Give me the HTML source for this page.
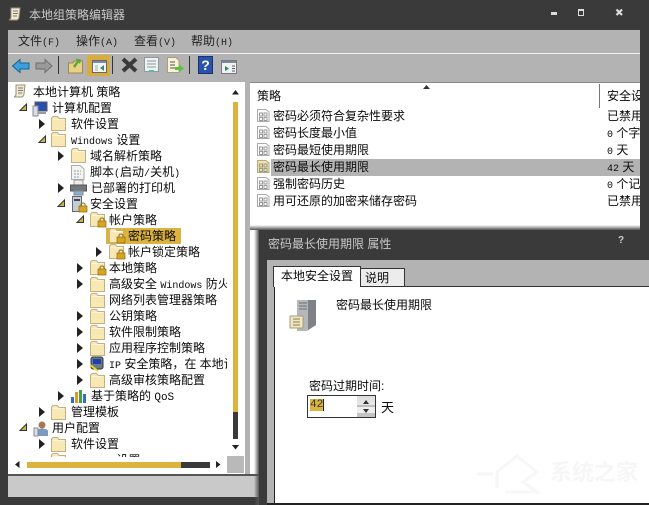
<!DOCTYPE html>
<html><head><meta charset="utf-8">
<style>
html,body{margin:0;padding:0}
body{width:649px;height:505px;overflow:hidden;position:relative;background:#3a3a3a;font-family:"Liberation Sans","WenQuanYi Zen Hei","Noto Sans CJK SC",sans-serif;font-size:12px;color:#0a0a0a}
.a{position:absolute}
.t{position:absolute;white-space:nowrap;line-height:16px;height:16px}
svg{position:absolute;overflow:visible}
.m{font-family:"Liberation Mono","WenQuanYi Zen Hei",monospace;font-size:10px}
</style></head><body>
<svg width="0" height="0" style="position:absolute">
<defs>
<g id="f"><path d="M.5 3.5V14.5H14.5V2.5H8L6.5.5H2L.5 2Z" fill="#f8e8b4" stroke="#c2b084"/><path d="M2 3.5H13" stroke="#fff6d8"/></g>
<path id="o" d="M0 0L6 5L0 10Z" fill="#222"/>
<path id="e" d="M6.5 0V6.5H0Z" fill="#c9b54d" stroke="#333" stroke-width="1"/>
<g id="l"><rect x="0" y="3" width="8" height="6" fill="#d9a520" stroke="#8a6a10" stroke-width=".7"/><path d="M2 3V1.5A2 1.500 0 0 1 6 1.500V3" fill="none" stroke="#8a6a10"/></g>
<g id="p"><path d="M.5 1.500H9L12 4V13.500H.5Z" fill="#fff" stroke="#aaa"/><rect x="2.500" y="5" width="3" height="3" fill="none" stroke="#999"/><rect x="7" y="5" width="3" height="3" fill="none" stroke="#999"/><rect x="2.500" y="9.500" width="3" height="3" fill="none" stroke="#999"/><rect x="7" y="9.500" width="3" height="3" fill="none" stroke="#999"/></g>
<g id="s"><path d="M3 1H12L11 10Q11 12 9 13H1Q3 12 3 10Z" fill="#f2ead0" stroke="#9a9278"/><path d="M5 4H10M5 6.500H10M5 9H9" stroke="#777"/></g>
</defs>
</svg>

<!-- title bar -->
<svg style="left:8px;top:7px" width="16" height="16"><use href="#s"/></svg>
<div class="t" style="left:29px;top:7px;color:#c9c9c9">本地组策略编辑器</div>
<div class="a" style="left:551px;top:12px;width:6px;height:3px;background:#ddd"></div>
<div class="a" style="left:578px;top:9px;width:4px;height:4px;border:1px solid #ddd;border-top-width:2px"></div>
<svg style="left:615px;top:8px" width="9" height="9"><path d="M1.500 1.500L7 7M7 1.500L1.500 7" stroke="#ddd" stroke-width="2.200"/></svg>

<!-- menu + toolbar -->
<div class="a" style="left:8px;top:30px;width:632px;height:52px;background:#b3b3b3"></div>
<div class="a" style="left:8px;top:53px;width:632px;height:1px;background:#f0f0f0"></div>
<div class="t" style="left:18px;top:33px;color:#222">文件<span class="m">(F)</span></div>
<div class="t" style="left:76px;top:33px;color:#222">操作<span class="m">(A)</span></div>
<div class="t" style="left:134px;top:33px;color:#222">查看<span class="m">(V)</span></div>
<div class="t" style="left:191px;top:33px;color:#222">帮助<span class="m">(H)</span></div>

<svg style="left:12px;top:58px" width="18" height="16"><path d="M.5 8L8 1.500V5H17V11H8V14.500Z" fill="#3ca0dc" stroke="#16668f"/></svg>
<svg style="left:35px;top:58px" width="18" height="16"><path d="M17 8L10 1.500V5H1V11H10V14.500Z" fill="#9a9a9a" stroke="#6e6e6e"/></svg>
<div class="a" style="left:58px;top:56px;width:1px;height:18px;background:#333"></div>
<svg style="left:68px;top:58px" width="16" height="16"><path d="M.5 5H5L6 3H14.500V15H.5Z" fill="#e9d184" stroke="#9c8a4f"/><path d="M5 8L9 3L8 .5L13 1.500L12 6L10.500 4.500L7 10Z" fill="#5aa83a"/></svg>
<div class="a" style="left:87px;top:55px;width:23px;height:21px;background:#d8ad3c"></div>
<svg style="left:92px;top:60px" width="15" height="13"><rect x=".5" y=".5" width="14" height="12" fill="#f5f5f5" stroke="#667"/><rect x="1" y="1" width="13" height="2" fill="#7a8ca0"/><rect x="3" y="5" width="3" height="6" fill="#bcd8d0"/><path d="M12 5V11L8 8Z" fill="#3c8a6a"/></svg>
<div class="a" style="left:112px;top:56px;width:1px;height:18px;background:#333"></div>
<svg style="left:121px;top:57px" width="17" height="16"><path d="M2 2L15 14M15 2L2 14" stroke="#3a3a3a" stroke-width="4"/></svg>
<svg style="left:144px;top:57px" width="16" height="16"><rect x=".5" y=".5" width="14" height="14" fill="#eef2f2" stroke="#8a9aa0"/><path d="M3 4H12M3 7H12M3 10H12" stroke="#8a9a9a"/><rect x="5" y="13" width="5" height="2" fill="#58b8b0"/></svg>
<svg style="left:167px;top:57px" width="18" height="17"><path d="M.5 .5H9L12 3.500V15.500H.5Z" fill="#f8f3d8" stroke="#a8a078"/><path d="M3 5H8M3 8H8M3 11H8" stroke="#555"/><path d="M8 10H12V7.500L17 11.500L12 15V13H8Z" fill="#5cbf3a"/></svg>
<div class="a" style="left:189px;top:56px;width:1px;height:18px;background:#333"></div>
<div class="a" style="left:198px;top:56px;width:15px;height:18px;background:#2a52a8;border:1px solid #16307a;box-sizing:border-box;color:#fff;font:bold 14px/16px 'Liberation Sans';text-align:center">?</div>
<svg style="left:221px;top:60px" width="16" height="14"><rect x=".5" y=".5" width="15" height="13" fill="#f2f2f2" stroke="#778"/><rect x="1" y="1" width="14" height="2" fill="#7a8a98"/><path d="M4 6V11L8 8.500Z" fill="#2f8a5a"/><path d="M11 6H14M11 8.500H14M11 11H14" stroke="#557"/></svg>

<!-- left panel -->
<div class="a" style="left:8px;top:82px;width:237px;height:392px;background:#fff;overflow:hidden"></div>
<div class="a" style="left:245px;top:82px;width:5px;height:392px;background:#b3b3b3"></div>
<div class="a" style="left:8px;top:474px;width:242px;height:2px;background:#555"></div>
<div class="a" style="left:8px;top:476px;width:251px;height:21px;background:#c9c9c9"></div>

<!-- tree -->
<svg style="left:13px;top:84px" width="16" height="16"><use href="#s"/></svg>
<div class="t" style="left:33px;top:84px">本地计算机 策略</div>
<svg style="left:20px;top:104px" width="8" height="8"><use href="#e"/></svg>
<svg style="left:32px;top:101px" width="16" height="15"><rect x="3" y="1" width="12" height="9" fill="#2a4fae" stroke="#556"/><rect x="1" y="5" width="5" height="10" fill="#d8dde2" stroke="#889"/><rect x="6" y="11" width="8" height="2" fill="#99a"/></svg>
<div class="t" style="left:52px;top:100px">计算机配置</div>

<svg style="left:39px;top:119px" width="7" height="10"><use href="#o"/></svg>
<svg style="left:51px;top:116px" width="15" height="15"><use href="#f"/></svg>
<div class="t" style="left:71px;top:116px">软件设置</div>
<svg style="left:39px;top:136px" width="8" height="8"><use href="#e"/></svg>
<svg style="left:51px;top:132px" width="15" height="15"><use href="#f"/></svg>
<div class="t" style="left:71px;top:132px"><span class="m">Windows</span> 设置</div>

<svg style="left:58px;top:151px" width="7" height="10"><use href="#o"/></svg>
<svg style="left:71px;top:148px" width="15" height="15"><use href="#f"/></svg>
<div class="t" style="left:90px;top:148px">域名解析策略</div>
<svg style="left:71px;top:165px" width="14" height="15"><path d="M.5 .5H9L13 4V14.500H.5Z" fill="#f4f4f4" stroke="#aaa"/><path d="M3 6H10M3 9H10M3 12H8" stroke="#999" stroke-dasharray="2 1"/></svg>
<div class="t" style="left:90px;top:164px">脚本<span class="m">(</span>启动<span class="m">/</span>关机<span class="m">)</span></div>
<svg style="left:58px;top:183px" width="7" height="10"><use href="#o"/></svg>
<svg style="left:70px;top:180px" width="17" height="16"><rect x="4" y="0" width="9" height="5" fill="#eee" stroke="#999"/><rect x=".5" y="5" width="16" height="6" fill="#777" stroke="#555"/><rect x="4" y="11" width="9" height="4" fill="#8fb0c8" stroke="#789"/></svg>
<div class="t" style="left:91px;top:180px">已部署的打印机</div>
<svg style="left:58px;top:200px" width="8" height="8"><use href="#e"/></svg>
<svg style="left:72px;top:196px" width="16" height="16"><rect x=".5" y=".5" width="9" height="15" fill="#c6ccd4" stroke="#667"/><rect x="2" y="3" width="6" height="2" fill="#445"/><use href="#l" x="7" y="7"/></svg>
<div class="t" style="left:90px;top:196px">安全设置</div>
<svg style="left:77px;top:216px" width="8" height="8"><use href="#e"/></svg>
<svg style="left:90px;top:212px" width="17" height="16"><use href="#f"/><use href="#l" x="8" y="6"/></svg>
<div class="t" style="left:109px;top:212px">帐户策略</div>

<div class="a" style="left:106px;top:228px;width:75px;height:16px;background:#dcb33f"></div>
<svg style="left:109px;top:228px" width="17" height="16"><use href="#f"/><use href="#l" x="8" y="6"/></svg>
<div class="t" style="left:128px;top:228px">密码策略</div>
<svg style="left:96px;top:247px" width="7" height="10"><use href="#o"/></svg>
<svg style="left:109px;top:244px" width="17" height="16"><use href="#f"/><use href="#l" x="8" y="6"/></svg>
<div class="t" style="left:128px;top:244px">帐户锁定策略</div>

<svg style="left:77px;top:263px" width="7" height="10"><use href="#o"/></svg>
<svg style="left:90px;top:260px" width="17" height="16"><use href="#f"/><use href="#l" x="8" y="6"/></svg>
<div class="t" style="left:109px;top:260px">本地策略</div>
<svg style="left:77px;top:279px" width="7" height="10"><use href="#o"/></svg>
<svg style="left:90px;top:277px" width="15" height="15"><use href="#f"/></svg>
<div class="a" style="left:109px;top:276px;width:118px;height:16px;overflow:hidden;white-space:nowrap;line-height:16px">高级安全 <span class="m">Windows</span> 防火墙</div>
<svg style="left:90px;top:293px" width="15" height="15"><use href="#f"/></svg>
<div class="t" style="left:109px;top:292px">网络列表管理器策略</div>
<svg style="left:77px;top:311px" width="7" height="10"><use href="#o"/></svg>
<svg style="left:90px;top:309px" width="15" height="15"><use href="#f"/></svg>
<div class="t" style="left:109px;top:308px">公钥策略</div>
<svg style="left:77px;top:327px" width="7" height="10"><use href="#o"/></svg>
<svg style="left:90px;top:325px" width="15" height="15"><use href="#f"/></svg>
<div class="t" style="left:109px;top:324px">软件限制策略</div>
<svg style="left:77px;top:343px" width="7" height="10"><use href="#o"/></svg>
<svg style="left:90px;top:341px" width="15" height="15"><use href="#f"/></svg>
<div class="t" style="left:109px;top:340px">应用程序控制策略</div>
<svg style="left:77px;top:359px" width="7" height="10"><use href="#o"/></svg>
<svg style="left:89px;top:356px" width="16" height="16"><rect x="2" y="1" width="12" height="12" rx="2" fill="#6a7a88" stroke="#334"/><rect x="4" y="3" width="8" height="5" fill="#1d3fa8"/><path d="M1 9L9 15" stroke="#e8d820" stroke-width="2"/></svg>
<div class="a" style="left:109px;top:356px;width:118px;height:16px;overflow:hidden;white-space:nowrap;line-height:16px"><span class="m">IP</span> 安全策略，在 本地计算机</div>
<svg style="left:77px;top:375px" width="7" height="10"><use href="#o"/></svg>
<svg style="left:90px;top:373px" width="15" height="15"><use href="#f"/></svg>
<div class="t" style="left:109px;top:372px">高级审核策略配置</div>
<svg style="left:58px;top:391px" width="7" height="10"><use href="#o"/></svg>
<svg style="left:70px;top:389px" width="17" height="15"><rect x="1" y="8" width="3" height="6" fill="#2f6fc0"/><rect x="5" y="3" width="3" height="11" fill="#d89a2a"/><rect x="9" y="1" width="3" height="13" fill="#46a046"/><rect x="13" y="5" width="3" height="9" fill="#2f6fc0"/></svg>
<div class="t" style="left:91px;top:388px">基于策略的 <span class="m" style="font-size:11px">QoS</span></div>
<svg style="left:39px;top:407px" width="7" height="10"><use href="#o"/></svg>
<svg style="left:51px;top:405px" width="15" height="15"><use href="#f"/></svg>
<div class="t" style="left:71px;top:404px">管理模板</div>
<svg style="left:20px;top:424px" width="8" height="8"><use href="#e"/></svg>
<svg style="left:33px;top:421px" width="16" height="16"><circle cx="9" cy="4" r="3.500" fill="#a87850"/><path d="M3 15V10Q3 8 9 7.500Q15 8 15 10V15Z" fill="#7a9ac0"/><rect x="1" y="7" width="4" height="8" fill="#d8e0ea" stroke="#889"/></svg>
<div class="t" style="left:52px;top:420px">用户配置</div>
<svg style="left:39px;top:439px" width="7" height="10"><use href="#o"/></svg>
<svg style="left:51px;top:437px" width="15" height="15"><use href="#f"/></svg>
<div class="t" style="left:71px;top:436px">软件设置</div>
<div class="a" style="left:51px;top:453px;width:100px;height:4px;overflow:hidden"><svg style="left:0;top:0" width="15" height="15"><use href="#f"/></svg><div class="t" style="left:20px;top:-1px"><span class="m" style="visibility:hidden">Windows</span> 设置</div></div>
<div class="a" style="left:9px;top:457px;width:218px;height:17px;background:#fff"></div>

<!-- tree scrollbars -->
<svg style="left:232px;top:90px" width="7" height="5"><path d="M0 4.500L3.500 0L7 4.500Z" fill="#222"/></svg>
<div class="a" style="left:233px;top:102px;width:5px;height:310px;background:#dcb33f"></div>
<div class="a" style="left:233px;top:412px;width:5px;height:27px;background:#3a3a3a"></div>
<svg style="left:232px;top:445px" width="7" height="5"><path d="M0 0L3.500 4.500L7 0Z" fill="#222"/></svg>
<svg style="left:15px;top:461px" width="5" height="7"><path d="M4.500 0L0 3.500L4.500 7Z" fill="#222"/></svg>
<div class="a" style="left:27px;top:462px;width:154px;height:6px;background:#dcb33f"></div>
<div class="a" style="left:181px;top:462px;width:29px;height:6px;background:#3a3a3a"></div>
<svg style="left:216px;top:461px" width="5" height="7"><path d="M0 0L4.500 3.500L0 7Z" fill="#222"/></svg>
<div class="a" style="left:227px;top:456px;width:17px;height:17px;background:#b9b9b9"></div>

<!-- right panel -->
<div class="a" style="left:250px;top:82px;width:390px;height:145px;background:#fff;border-top:1px solid #888;box-sizing:border-box"></div>
<div class="a" style="left:250px;top:225px;width:399px;height:5px;background:linear-gradient(rgba(255,255,255,1),#555)"></div>
<div class="a" style="left:640px;top:225px;width:9px;height:5px;background:#3a3a3a"></div>
<div class="a" style="left:250px;top:230px;width:10px;height:246px;background:#fff"></div>
<div class="a" style="left:250px;top:474px;width:10px;height:2px;background:#555"></div>
<svg style="left:423px;top:85px" width="7" height="4"><path d="M0 4L3.500 0L7 4Z" fill="#333"/></svg>
<div class="t" style="left:257px;top:88px">策略</div>
<div class="a" style="left:599px;top:84px;width:1px;height:24px;background:#777"></div>
<div class="a" style="left:607px;top:88px;width:33px;height:16px;overflow:hidden;white-space:nowrap;line-height:16px">安全设置</div>

<div class="a" style="left:271px;top:159px;width:369px;height:17px;background:#b3b3b3"></div>
<svg style="left:257px;top:108px" width="13" height="15"><use href="#p"/></svg>
<svg style="left:257px;top:125px" width="13" height="15"><use href="#p"/></svg>
<svg style="left:257px;top:142px" width="13" height="15"><use href="#p"/></svg>
<svg style="left:257px;top:159px" width="13" height="15"><path d="M.5 1.500H9L12 4V13.500H.5Z" fill="#f0e2b0" stroke="#b8a878"/><rect x="2.500" y="5" width="3" height="3" fill="none" stroke="#998"/><rect x="7" y="5" width="3" height="3" fill="none" stroke="#998"/><rect x="2.500" y="9.500" width="3" height="3" fill="none" stroke="#998"/><rect x="7" y="9.500" width="3" height="3" fill="none" stroke="#998"/></svg>
<svg style="left:257px;top:176px" width="13" height="15"><use href="#p"/></svg>
<svg style="left:257px;top:193px" width="13" height="15"><use href="#p"/></svg>
<div class="t" style="left:273px;top:108px">密码必须符合复杂性要求</div>
<div class="t" style="left:273px;top:125px">密码长度最小值</div>
<div class="t" style="left:273px;top:142px">密码最短使用期限</div>
<div class="t" style="left:273px;top:159px">密码最长使用期限</div>
<div class="t" style="left:273px;top:176px">强制密码历史</div>
<div class="t" style="left:273px;top:193px">用可还原的加密来储存密码</div>
<div class="t" style="left:607px;top:108px;width:33px;overflow:hidden">已禁用</div>
<div class="t" style="left:607px;top:125px;width:33px;overflow:hidden"><span class="m">0</span> 个字符</div>
<div class="t" style="left:607px;top:142px;width:33px;overflow:hidden"><span class="m">0</span> 天</div>
<div class="t" style="left:607px;top:159px;width:33px;overflow:hidden"><span class="m">42</span> 天</div>
<div class="t" style="left:607px;top:176px;width:33px;overflow:hidden"><span class="m">0</span> 个记住</div>
<div class="t" style="left:607px;top:193px;width:33px;overflow:hidden">已禁用</div>

<!-- dialog -->
<div class="a" style="left:254px;top:230px;width:5px;height:275px;background:linear-gradient(90deg,rgba(90,90,90,0),#555)"></div>
<div class="a" style="left:259px;top:230px;width:390px;height:275px;background:#3a3a3a"></div>
<div class="a" style="left:267px;top:260px;width:382px;height:243px;background:#b3b3b3"></div>
<div class="a" style="left:274px;top:287px;width:375px;height:217px;background:#fff;border-left:1px solid #222;box-sizing:border-box"></div>
<div class="a" style="left:274px;top:286px;width:375px;height:1px;background:#333"></div>
<div class="a" style="left:267px;top:503px;width:382px;height:2px;background:#222"></div>
<div class="t" style="left:268px;top:236px;color:#c9c9c9">密码最长使用期限 属性</div>
<div class="t" style="left:618px;top:233px;color:#ccc;font-size:10px;font-weight:bold">?</div>
<div class="a" style="left:273px;top:266px;width:88px;height:21px;background:#fff;border:1px solid #333;border-bottom:0;box-sizing:border-box"></div>
<div class="a" style="left:360px;top:268px;width:45px;height:18px;background:#ececec;border:1px solid #333;border-bottom:0;box-sizing:border-box"></div>
<div class="t" style="left:281px;top:268px">本地安全设置</div>
<div class="t" style="left:365px;top:270px">说明</div>
<svg style="left:288px;top:298px" width="32" height="34"><path d="M9 2H28V27L19 33H9Z" fill="#b4b8bc"/><path d="M20 2H28V27L20 32Z" fill="#7e8286"/><path d="M11 5H19M11 8H19M11 11H19" stroke="#6a6e72"/><path d="M2 18H15V30H2Z" fill="#f0e6c0" stroke="#a89c70"/><path d="M5 21H12M5 24H12M5 27H12" stroke="#8a8058"/></svg>
<div class="t" style="left:336px;top:297px">密码最长使用期限</div>
<div class="t" style="left:309px;top:378px">密码过期时间:</div>
<div class="a" style="left:307px;top:395px;width:69px;height:23px;border:1px solid #333;box-sizing:border-box;background:#fff"></div>
<div class="a" style="left:310px;top:399px;width:13px;height:12px;background:#dcb33f;border-right:1px solid #222;font:11px/12px 'Liberation Mono',monospace;color:#333">42</div>
<div class="a" style="left:357px;top:396px;width:18px;height:21px;background:linear-gradient(#dcdcdc 0,#e8e8e8 9px,#bdbdbd 9px,#bdbdbd 11px,#eee 11px,#eee 17px,#c4c4c4 17px)"></div>
<svg style="left:363px;top:400px" width="6" height="4"><path d="M0 4L3 0L6 4Z" fill="#333"/></svg>
<svg style="left:363px;top:409px" width="6" height="4"><path d="M0 0L3 4L6 0Z" fill="#333"/></svg>
<div class="t" style="left:381px;top:400px;font-size:13px">天</div>

<!-- watermark -->
<div class="t" style="left:550px;top:461px;font-size:22px;line-height:24px;height:24px;color:#f6f6f6;font-weight:bold">系统之家</div>
<svg style="left:475px;top:452px" width="75" height="46"><path d="M2 22H18M22 36V20L42 4L62 20L48 30L62 40H30" fill="none" stroke="#f7f7f7" stroke-width="3"/></svg>
</body></html>
